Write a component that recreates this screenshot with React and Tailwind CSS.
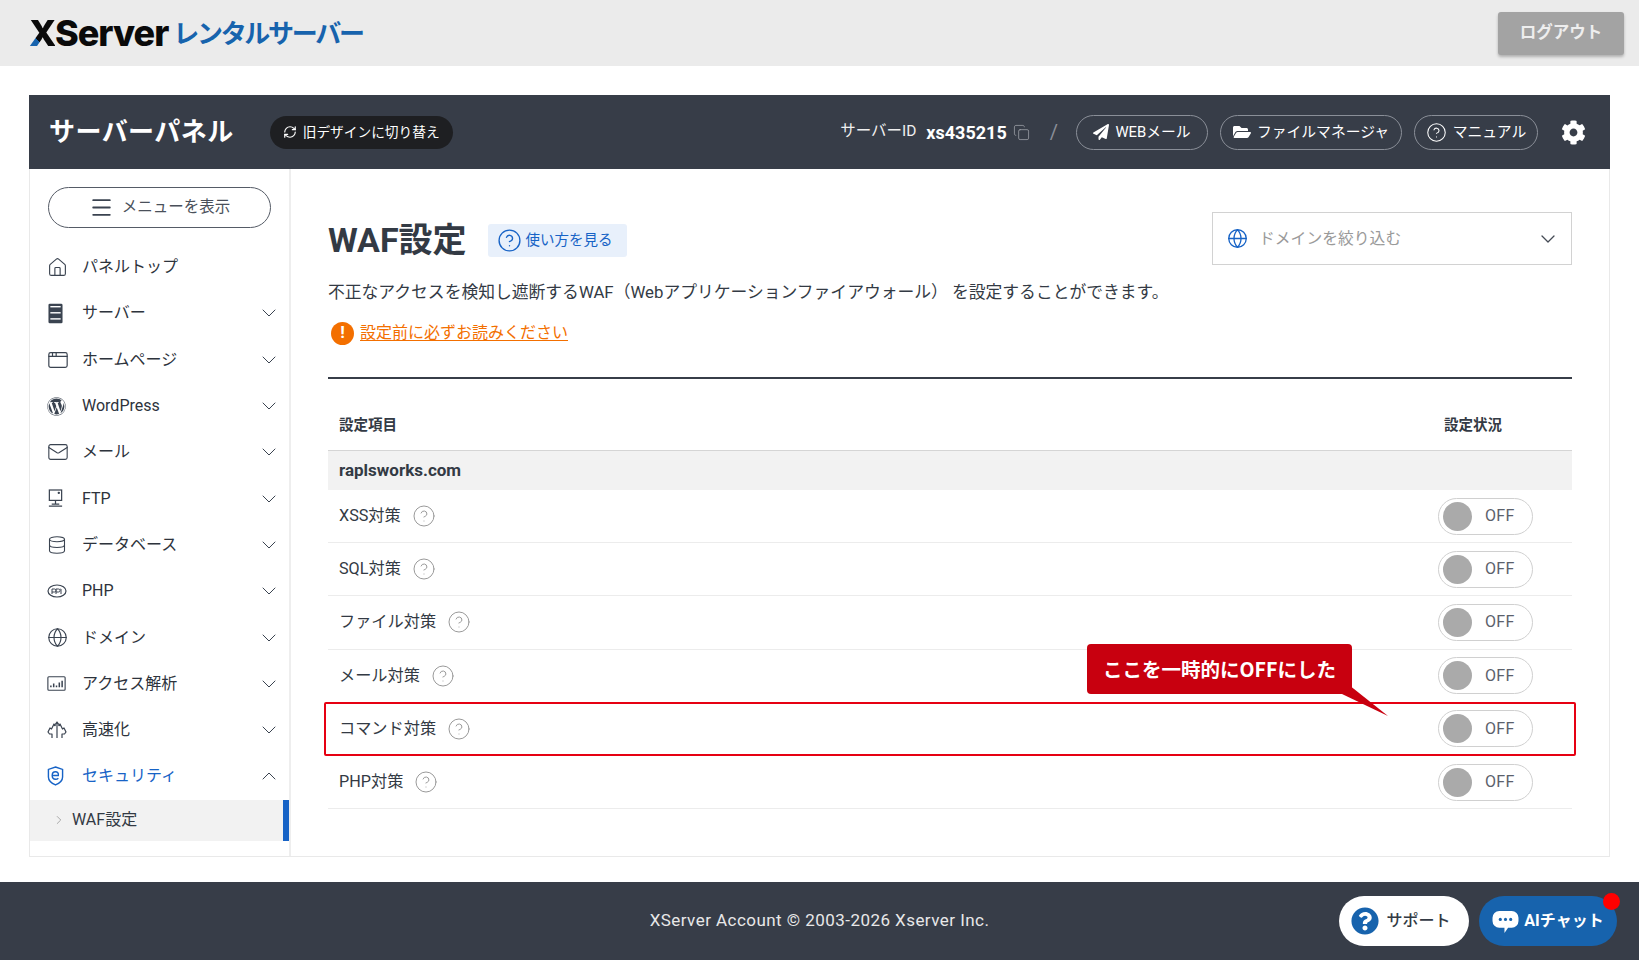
import { ChevronDown, ChevronUp, ChevronRight, Home, AppWindow, Mail, Database, Globe, Menu, RefreshCw, Copy, CircleHelp } from "lucide-react";
import { FaWordpress, FaPaperPlane, FaFolderOpen, FaCog, FaQuestionCircle } from "react-icons/fa";

const FONT = "font-['Roboto','Noto_Sans_CJK_JP',sans-serif]";

function ServerIcon() {
    return (
        <svg viewBox="0 0 16 22" className="w-[15px] h-[21px] ml-[1px]">
            <rect x="0.5" y="0.5" width="15" height="21" rx="1.5" fill="#3a4350" />
            <rect x="2.5" y="3" width="11" height="1.5" fill="#fff" />
            <rect x="2.5" y="9.5" width="11" height="1.5" fill="#fff" />
            <rect x="2.5" y="16" width="11" height="1.5" fill="#fff" />
        </svg>
    );
}

function FtpIcon() {
    return (
        <svg viewBox="0 0 18 20" className="w-[17px] h-[19px]" fill="none" stroke="#3a4350" strokeWidth="1.3">
            <rect x="2.5" y="1" width="13" height="11" />
            <path d="M9 12v4M2 18h14M5 16h8" />
            <circle cx="12.5" cy="4" r="0.6" fill="#3a4350" />
        </svg>
    );
}

function PhpIcon() {
    return (
        <svg viewBox="0 0 20 14" className="w-[20px] h-[14px]" fill="none" stroke="#3a4350" strokeWidth="1.2">
            <ellipse cx="10" cy="7" rx="9" ry="6" />
            <path d="M5 10V5h2.5a1.3 1.3 0 0 1 0 3H5M9 10V5h2.5a1.3 1.3 0 0 1 0 3H9M14 10V5h-0.5" strokeWidth="1" />
        </svg>
    );
}

function AnalyticsIcon() {
    return (
        <svg viewBox="0 0 20 16" className="w-[19px] h-[15px]" fill="none" stroke="#3a4350" strokeWidth="1.2">
            <rect x="0.8" y="0.8" width="18.4" height="14.4" rx="1" />
            <path d="M4 12v-2M7 12V8M10 12v-2M13 12V7M16 12V5" strokeWidth="1.6" />
        </svg>
    );
}

function SpeedIcon() {
    return (
        <svg viewBox="0 0 20 20" className="w-[20px] h-[20px]" fill="none" stroke="#3a4350" strokeWidth="1.2" strokeLinejoin="round">
            <path d="M5 18v-4H2.500L1 12l2-4 1.500 1L7 4l1.500 2M15 18v-4h2.500L19 12l-2-4-1.500 1L13 4l-1.500 2" />
            <path d="M10 18V2M7 6l3-4 3 4" />
        </svg>
    );
}

function ShieldIcon() {
    return (
        <svg viewBox="0 0 18 21" className="w-[17px] h-[20px]" fill="none" stroke="#1763c6" strokeWidth="1.5">
            <path d="M9 1l7.500 2.500v8c0 4-4 7-7.500 8.500-3.500-1.500-7.500-4.500-7.500-8.500v-8z" />
            <path d="M5.500 10h6.500c.5-2.500-1-4-3-4s-3.500 1.700-3.500 4 1.500 4 3.500 4c1.200 0 2.200-.4 3-1.200" />
        </svg>
    );
}

function ChatIcon() {
    return (
        <svg viewBox="0 0 26 24" className="w-[27px] h-[25px] mt-[2px]">
            <path d="M7 1h12a6.500 6.500 0 0 1 6.500 6.500v3A6.500 6.500 0 0 1 19 17h-3.500L12 22v-5H7A6.500 6.500 0 0 1 .5 10.500v-3A6.500 6.500 0 0 1 7 1z" fill="#fff" />
            <circle cx="8" cy="9" r="1.500" fill="#1763ad" />
            <circle cx="13" cy="9" r="1.500" fill="#1763ad" />
            <circle cx="18" cy="9" r="1.500" fill="#1763ad" />
        </svg>
    );
}

const MENU = [
    { label: "パネルトップ", icon: <Home size={21} strokeWidth={1.3} color="#3a4350" />, noArrow: true },
    { label: "サーバー", icon: <ServerIcon /> },
    { label: "ホームページ", icon: <AppWindow size={22} strokeWidth={1.3} color="#3a4350" /> },
    { label: "WordPress", icon: <FaWordpress size={19} color="#3a4350" /> },
    { label: "メール", icon: <Mail size={22} strokeWidth={1.2} color="#3a4350" /> },
    { label: "FTP", icon: <FtpIcon /> },
    { label: "データベース", icon: <Database size={20} strokeWidth={1.3} color="#3a4350" /> },
    { label: "PHP", icon: <PhpIcon /> },
    { label: "ドメイン", icon: <Globe size={21} strokeWidth={1.3} color="#3a4350" /> },
    { label: "アクセス解析", icon: <AnalyticsIcon /> },
    { label: "高速化", icon: <SpeedIcon /> },
];

const RULES = ["XSS対策", "SQL対策", "ファイル対策", "メール対策", "コマンド対策", "PHP対策"];

function Pill({ icon, children, className }) {
    return (
        <button type="button" className={`flex items-center justify-center gap-[6px] h-[35px] rounded-full border border-[#8a8f98] text-white text-[14.800px] ${className}`}>
            {icon}
            {children}
        </button>
    );
}

function Toggle() {
    return (
        <div className="flex items-center w-[95px] h-[37px] rounded-full border border-[#d0d0d0] pl-[4px] bg-white">
            <div className="w-[29px] h-[29px] rounded-full bg-[#aaaaaa]" />
            <span className="ml-[13px] text-[16px] tracking-[0.3px] text-[#5b616b]">OFF</span>
        </div>
    );
}

function RuleRow({ label, highlighted }) {
    return (
        <div className="relative flex items-center justify-between h-[53.200px] border-b border-[#ececec] pl-[11px] pr-[39px]">
            <div className="flex items-center gap-[11px] text-[16.200px] text-[#333a44]">
                {label}
                <CircleHelp size={24} strokeWidth={1} color="#9a9a9a" />
            </div>
            <Toggle />
            {/* Red frame around the row */}
            {highlighted && (
                <div className="absolute -left-[4px] -right-[4px] -top-[1px] -bottom-[1px] border-2 border-[#e60012] rounded-[2px]" />
            )}
        </div>
    );
}

export default function App() {
    return (
        <div className={`flex flex-col h-[960px] overflow-hidden bg-white text-[#333a44] ${FONT}`}>
            {/* Top bar */}
            <header className="flex items-center justify-between h-[66px] shrink-0 bg-[#ebebeb] pl-[29px] pr-[15px]">
                <div className="flex items-center gap-[5px]">
                    <span className="font-['Inter',sans-serif] font-extrabold text-[36px] tracking-[-1px] text-[#0a0a0a] leading-none">
                        <span className="bg-[linear-gradient(45deg,#1763ad_33%,#0a0a0a_33%)] bg-clip-text text-transparent">X</span>Server
                    </span>
                    <span className="font-bold text-[26px] tracking-[-2.300px] text-[#1763ad] leading-none mt-[2px]">レンタルサーバー</span>
                </div>
                <button type="button" className="flex items-center justify-center w-[126px] h-[43px] rounded-[3px] bg-[#a3a3a3] text-[#eeeeee] font-bold text-[16.500px] shadow-[0_2px_3px_rgba(0,0,0,0.25)]">
                    ログアウト
                </button>
            </header>

            {/* Panel */}
            <div className="flex flex-col h-[762px] mt-[29px] mx-[29px] border border-[#e9e9e9] border-t-0 shrink-0">
                <div className="flex items-center h-[74px] shrink-0 bg-[#373d48] -mx-[1px] pl-[20px] pr-[24px] text-white">
                    <span className="font-bold text-[26px] tracking-[0.450px]">サーバーパネル</span>
                    <button type="button" className="flex items-center justify-center gap-[6px] ml-[36px] w-[183px] h-[33px] rounded-full bg-[#1e1f22] text-[13.700px]">
                        <RefreshCw size={14} />
                        旧デザインに切り替え
                    </button>
                    <div className="ml-auto flex items-center">
                        <span className="text-[15.500px] text-[#f0f0f0]">サーバーID</span>
                        <span className="ml-[10px] font-bold text-[18px]">xs435215</span>
                        <Copy size={17} strokeWidth={1} color="#a8acb3" className="ml-[6px]" />
                        <span className="ml-[20px] mr-[18px] text-[20px] text-[#8a8f98]">/</span>
                        <div className="flex items-center gap-[12px]">
                            <Pill className="w-[132px]" icon={<FaPaperPlane size={16} />}>WEBメール</Pill>
                            <Pill className="w-[182px]" icon={<FaFolderOpen size={18} />}>ファイルマネージャ</Pill>
                            <Pill className="w-[124px]" icon={<CircleHelp size={21} strokeWidth={1.2} />}>マニュアル</Pill>
                        </div>
                        <FaCog size={25} className="ml-[23px]" />
                    </div>
                </div>

                <div className="flex flex-1 min-h-0">
                    {/* Sidebar */}
                    <aside className="w-[261px] shrink-0 border-r-2 border-[#eeeeee] pt-[18px]">
                        <button type="button" className="flex items-center justify-center gap-[8px] ml-[18px] w-[223px] h-[41px] rounded-full border border-[#555b66] text-[15.500px] text-[#4a505a]">
                            <Menu size={25} strokeWidth={1.7} color="#3a4350" />
                            メニューを表示
                        </button>
                        <nav className="mt-[16px]">
                            {MENU.map((item) => (
                                <div key={item.label} className="flex items-center h-[46.300px] pl-[17px] pr-[8px] text-[16px] text-[#2d333c]">
                                    <span className="flex items-center w-[35px] shrink-0">{item.icon}</span>
                                    <span>{item.label}</span>
                                    {!item.noArrow && <ChevronDown size={24} strokeWidth={1} color="#3a4350" className="ml-auto" />}
                                </div>
                            ))}
                            <div className="flex items-center h-[46.300px] pl-[17px] pr-[8px] text-[16px] text-[#1763c6]">
                                <span className="flex items-center w-[35px] shrink-0"><ShieldIcon /></span>
                                <span>セキュリティ</span>
                                <ChevronUp size={24} strokeWidth={1} color="#3a4350" className="ml-auto" />
                            </div>
                            <div className="flex items-center h-[41px] pl-[22px] bg-[#f2f2f2] border-r-[6px] border-[#1763c6] text-[16px] text-[#333a44]">
                                <ChevronRight size={14} strokeWidth={1.2} color="#8a8a8a" />
                                <span className="ml-[6px]">WAF設定</span>
                            </div>
                        </nav>
                    </aside>

                    {/* Main */}
                    <main className="flex-1 min-w-0 pt-[43px] pl-[37px] pr-[37px]">
                        <div className="flex items-start justify-between">
                            <div className="flex items-center h-[56px]">
                                <h1 className="font-bold text-[34px] text-[#333a44]">WAF設定</h1>
                                <a className="flex items-center gap-[4px] ml-[21px] w-[139px] h-[33px] pl-[9px] rounded-[3px] bg-[#e8f0fb] text-[14.500px] text-[#1763c6]">
                                    <CircleHelp size={25} strokeWidth={1.3} />
                                    <span className="mt-[2px]">使い方を見る</span>
                                </a>
                            </div>
                            <div className="flex items-center w-[360px] h-[53px] border border-[#d2d2d2] pl-[14px] pr-[11px] text-[15.800px] text-[#9a9a9a]">
                                <Globe size={21} strokeWidth={1.5} color="#1763c6" />
                                <span className="ml-[11px]">ドメインを絞り込む</span>
                                <ChevronDown size={24} strokeWidth={1.3} color="#444a54" className="ml-auto" />
                            </div>
                        </div>
                        <p className="mt-[12px] h-[24px] leading-[24px] text-[16.800px] text-[#333a44]">
                            不正なアクセスを検知し遮断するWAF（Webアプリケーションファイアウォール） を設定することができます。
                        </p>
                        <div className="flex items-center mt-[17px] h-[24px] pl-[3px]">
                            <span className="flex items-center justify-center w-[23px] h-[23px] rounded-full bg-[#f36f00] text-white font-bold text-[17px]">!</span>
                            <a className="ml-[6px] text-[16px] text-[#f36f00] underline underline-offset-2">設定前に必ずお読みください</a>
                        </div>
                        <div className="mt-[32px] h-[2px] bg-[#373d48]" />

                        {/* Table */}
                        <div className="relative">
                            <div className="flex items-end justify-between h-[72px] pb-[13px] pl-[11px] pr-[70px] border-b border-[#d5d5d5] font-bold text-[14.500px]">
                                <span>設定項目</span>
                                <span>設定状況</span>
                            </div>
                            <div className="flex items-center h-[39px] pl-[11px] bg-[#f2f2f2] font-bold text-[17px]">raplsworks.com</div>
                            {RULES.map((rule) => (
                                <RuleRow key={rule} label={rule} highlighted={rule === "コマンド対策"} />
                            ))}

                            {/* Callout */}
                            <div className="absolute left-[759px] top-[265px] flex items-center justify-center w-[265px] h-[50px] rounded-[4px] bg-[#c8000f] text-white font-['Noto_Sans_CJK_JP',sans-serif] font-bold text-[19.500px]">
                                ここを一時的にOFFにした
                                <svg viewBox="0 0 46 32" className="absolute left-[255px] top-[41px] w-[46px] h-[32px]">
                                    <path d="M0 9V0h7l39 31z" fill="#c8000f" />
                                </svg>
                            </div>
                        </div>
                    </main>
                </div>
            </div>

            {/* Footer */}
            <footer className="relative flex items-center justify-center mt-[25px] h-[78px] shrink-0 bg-[#373d48] text-[17px] tracking-[0.450px] text-[#e8e8e8]">
                XServer Account © 2003-2026 Xserver Inc.
                <div className="absolute right-[22px] top-[14px] flex items-center gap-[10px] tracking-normal">
                    <button type="button" className="flex items-center justify-center gap-[7px] w-[130px] h-[50px] pr-[6px] rounded-full bg-white text-[#333a44] text-[16px] font-medium">
                        <FaQuestionCircle size={28} color="#1763ad" />
                        サポート
                    </button>
                    <button type="button" className="relative flex items-center justify-center gap-[5px] w-[138px] h-[50px] rounded-full bg-[#1763ad] text-white text-[16px] font-bold">
                        <ChatIcon />
                        AIチャット
                        <span className="absolute -right-[3px] -top-[3px] w-[17px] h-[17px] rounded-full bg-[#ff0000]" />
                    </button>
                </div>
            </footer>
        </div>
    );
}
